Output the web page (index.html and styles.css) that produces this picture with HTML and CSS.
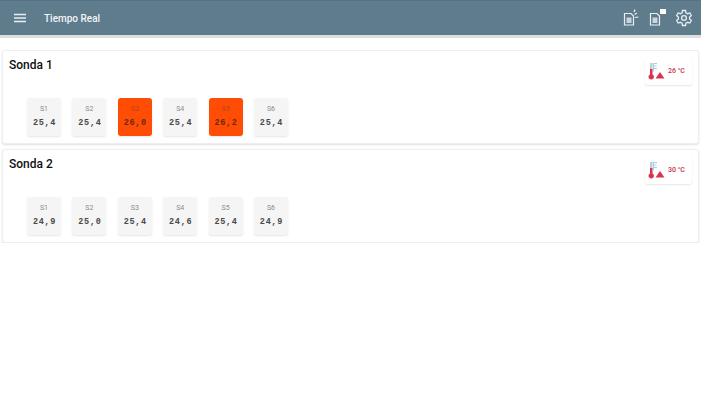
FILE: index.html
```html
<!DOCTYPE html>
<html lang="en">
<head>
    <meta charset="UTF-8">
    <title>Tiempo Real</title>
    <link rel="stylesheet" href="styles.css">
</head>
<body>
    <header class="topbar">
        <svg class="menu-icon" width="12" height="10" viewBox="0 0 12 10">
            <path d="M0 1.500h12M0 5h12M0 8.500h12" stroke="#e8eef1" stroke-width="1.500"/>
        </svg>
        <div class="title">Tiempo Real</div>
        <div class="actions">
            <svg width="18" height="18" viewBox="0 0 18 18" fill="none" stroke="#e8eef1" stroke-width="1.200">
                <path d="M1.500 4.500h6.500l2.500 2.500v9h-9z"/>
                <path d="M3.500 8.500h5v5.500h-5z" fill="#c9d5db" stroke="none"/>
                <path d="M11.500 5.500l2.500-1.500M12 8.500l3.500-.5M11 3l1-2.500" stroke-width="1.200"/>
            </svg>
            <svg width="18" height="18" viewBox="0 0 18 18" fill="none" stroke="#e8eef1" stroke-width="1.200">
                <path d="M1.500 4.500h6.500l2.500 2.500v9h-9z"/>
                <path d="M3.500 8.500h5v5.500h-5z" fill="#c9d5db" stroke="none"/>
                <path d="M11 0h6v5h-6z" fill="#fff" stroke="none"/>
            </svg>
            <svg width="18" height="18" viewBox="0 0 24 24" fill="none" stroke="#e8eef1" stroke-width="1.700">
                <circle cx="12" cy="12" r="3.200"/>
                <path d="M10 2h4l.6 3 2.300 1.300 2.900-1 2 3.400-2.300 2 0 2.600 2.300 2-2 3.400-2.900-1-2.300 1.300-.6 3h-4l-.6-3-2.300-1.300-2.900 1-2-3.400 2.300-2 0-2.600-2.300-2 2-3.400 2.900 1L9.400 5z"/>
            </svg>
        </div>
    </header>

    <main class="content">
        <section class="probe">
            <div class="probe-head">
                <h2>Sonda 1</h2>
                <div class="alarm">
                    <svg width="18" height="18" viewBox="0 0 18 18">
                        <path d="M6.500 1.500h3.500M6.500 4h3M6.500 6.500h3.500M6.500 1v8.500" stroke="#a9cfe0" stroke-width="1.100" fill="none"/>
                        <path d="M3 1h2.500v6H3z" fill="#b9cfd9"/>
                        <path d="M3 7h2.500v5.500a2.700 2.700 0 1 1-2.500 0z" fill="#d8344f"/>
                        <path d="M13 10l4.500 6.500h-9z" fill="#d8344f"/>
                    </svg>
                    <span>26 °C</span>
                </div>
            </div>
            <div class="sensors">
                <div class="sensor"><span class="name">S1</span><span class="value">25,4</span></div>
                <div class="sensor"><span class="name">S2</span><span class="value">25,4</span></div>
                <div class="sensor hot"><span class="name">S3</span><span class="value">26,0</span></div>
                <div class="sensor"><span class="name">S4</span><span class="value">25,4</span></div>
                <div class="sensor hot"><span class="name">S5</span><span class="value">26,2</span></div>
                <div class="sensor"><span class="name">S6</span><span class="value">25,4</span></div>
            </div>
        </section>

        <section class="probe">
            <div class="probe-head">
                <h2>Sonda 2</h2>
                <div class="alarm">
                    <svg width="18" height="18" viewBox="0 0 18 18">
                        <path d="M6.500 1.500h3.500M6.500 4h3M6.500 6.500h3.500M6.500 1v8.500" stroke="#a9cfe0" stroke-width="1.100" fill="none"/>
                        <path d="M3 1h2.500v6H3z" fill="#b9cfd9"/>
                        <path d="M3 7h2.500v5.500a2.700 2.700 0 1 1-2.500 0z" fill="#d8344f"/>
                        <path d="M13 10l4.500 6.500h-9z" fill="#d8344f"/>
                    </svg>
                    <span>30 °C</span>
                </div>
            </div>
            <div class="sensors">
                <div class="sensor"><span class="name">S1</span><span class="value">24,9</span></div>
                <div class="sensor"><span class="name">S2</span><span class="value">25,0</span></div>
                <div class="sensor"><span class="name">S3</span><span class="value">25,4</span></div>
                <div class="sensor"><span class="name">S4</span><span class="value">24,6</span></div>
                <div class="sensor"><span class="name">S5</span><span class="value">25,4</span></div>
                <div class="sensor"><span class="name">S6</span><span class="value">24,9</span></div>
            </div>
        </section>
    </main>
</body>
</html>
```

FILE: styles.css
```css
body {
    margin: 0;
    background: #fff;
    font-family: Roboto, "Liberation Sans", sans-serif;
}
.topbar {
    display: flex;
    align-items: center;
    height: 38px;
    box-sizing: border-box;
    padding: 0 8px 0 14px;
    background: #5f7c8d;
    border-top: 1px solid #557286;
    border-bottom: 3px solid #dcdedf;
}
.menu-icon {
    margin-right: 18px;
}
.title {
    color: #f1f4f6;
    font-size: 10px;
    font-weight: 500;
}
.actions {
    display: flex;
    align-items: center;
    gap: 8px;
    margin-left: auto;
}
.content {
    display: flex;
    flex-direction: column;
    gap: 5px;
    padding: 12px 2px 0;
}
.probe {
    height: 94px;
    box-sizing: border-box;
    background: #fff;
    border: 1px solid #eee;
    border-radius: 3px;
    box-shadow: 0 1px 2px rgba(0,0,0,0.12);
    padding: 6px 6px 0 6px;
}
.probe-head {
    display: flex;
    justify-content: space-between;
    align-items: flex-start;
    height: 41px;
}
.probe-head h2 {
    margin: 0;
    font-size: 12px;
    line-height: 17px;
    font-weight: 500;
    color: #111;
}
.alarm {
    display: flex;
    align-items: center;
    gap: 3px;
    width: 47px;
    height: 28px;
    box-sizing: border-box;
    padding-left: 2px;
    background: #fff;
    border-radius: 3px;
    box-shadow: 0 1px 2px rgba(0,0,0,0.1);
}
.alarm span {
    color: #c9304a;
    font-size: 7px;
    font-weight: 500;
    white-space: nowrap;
}
.sensors {
    display: flex;
    gap: 11.400px;
    padding-left: 18px;
}
.sensor {
    display: flex;
    flex-direction: column;
    align-items: center;
    width: 34px;
    height: 38px;
    box-sizing: border-box;
    padding-top: 6px;
    background: #f5f5f5;
    border-radius: 3px;
    box-shadow: 0 1px 2px rgba(0,0,0,0.1);
}
.sensor .name {
    font-size: 7px;
    line-height: 10px;
    color: #8a8a8a;
}
.sensor .value {
    margin-top: 4px;
    padding-left: 1px;
    font-family: "Liberation Mono", monospace;
    font-size: 8.500px;
    line-height: 10px;
    font-weight: bold;
    letter-spacing: 0.700px;
    color: #4a4a4a;
}
.sensor.hot {
    background: #ff4d06;
}
.sensor.hot .name {
    color: #b5441c;
}
.sensor.hot .value {
    color: #6b2a10;
}
```
